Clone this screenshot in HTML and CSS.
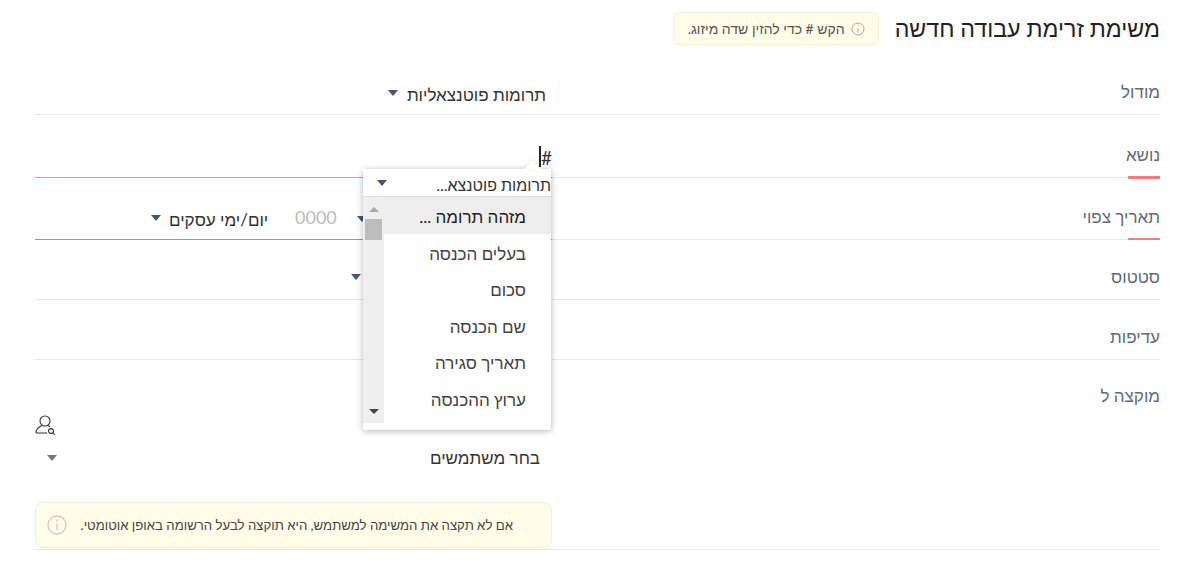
FILE: index.html
```html
<!DOCTYPE html>
<html lang="he" dir="rtl">
<head>
<meta charset="utf-8">
<title>משימת זרימת עבודה חדשה</title>
<link rel="stylesheet" href="styles.css">
</head>
<body>
<main class="form">
  <header class="head">
    <h1 class="title">משימת זרימת עבודה חדשה</h1>
    <div class="hint">
      <svg class="hint-icon" viewBox="0 0 14 14"><circle cx="7" cy="7" r="6"/><path d="M7 6v4.500M7 3.500v1.200"/></svg>
      <span>הקש # כדי להזין שדה מיזוג.</span>
    </div>
  </header>

  <section class="row row-module">
    <label class="label">מודול</label>
    <div class="field plain">
      <span class="value">תרומות פוטנצאליות</span>
      <i class="caret"></i>
    </div>
  </section>

  <section class="row row-subject">
    <label class="label req">נושא</label>
    <div class="field active">
      <span class="value hash">#</span><span class="cursor"></span>
      <div class="popup">
        <i class="notch"></i>
        <div class="popup-head"><span>תרומות פוטנצא...</span><i class="caret"></i></div>
        <div class="popup-body">
          <ul class="list">
            <li class="sel">מזהה תרומה ...</li>
            <li>בעלים הכנסה</li>
            <li>סכום</li>
            <li>שם הכנסה</li>
            <li>תאריך סגירה</li>
            <li>ערוץ ההכנסה</li>
          </ul>
          <div class="scroll">
            <i class="arrow up"></i>
            <i class="thumb"></i>
            <i class="arrow down"></i>
          </div>
        </div>
      </div>
    </div>
  </section>

  <section class="row row-date">
    <label class="label req">תאריך צפוי</label>
    <div class="field dated">
      <i class="caret"></i>
      <span class="zeros">0000</span>
      <span class="value">יום/ימי עסקים</span>
      <i class="caret"></i>
    </div>
  </section>

  <section class="row row-status">
    <label class="label">סטטוס</label>
    <div class="field plain"><i class="caret"></i></div>
  </section>

  <section class="row row-priority">
    <label class="label">עדיפות</label>
    <div class="field plain"></div>
  </section>

  <section class="row row-owner">
    <label class="label">מוקצה ל</label>
    <div class="owner">
      <svg class="user-icon" viewBox="0 0 20 20"><circle cx="10" cy="6" r="5"/><path d="M7 10.500C4 12 1.800 14 1 16.500c-.2.9.3 1.500 1.200 1.500H12M13 10.500c.8.400 1.500.9 2 1.300"/><circle cx="16" cy="16" r="2.400"/><path d="M17.700 17.700l2.300 2.300"/></svg>
      <div class="pick">
        <span class="value">בחר משתמשים</span>
        <i class="caret grey"></i>
      </div>
      <div class="note">
        <span>אם לא תקצה את המשימה למשתמש, היא תוקצה לבעל הרשומה באופן אוטומטי.</span>
        <svg class="note-icon" viewBox="0 0 20 20"><circle cx="10" cy="10" r="9"/><path d="M10 8.500v6.500M10 4.500v2"/></svg>
      </div>
    </div>
  </section>
</main>
</body>
</html>
```
FILE: styles.css
```css
* { box-sizing: border-box; }
html, body { margin: 0; padding: 0; background: #fff; height: 562px; overflow: hidden; }
body { font-family: "Lato", "Liberation Sans", sans-serif; color: #333; }
i { display: block; font-style: normal; }

.form { padding: 0 35px; }

.head { display: flex; align-items: flex-start; height: 70px; padding-top: 12px; }
.title { margin: 0 0 0 16px; font-size: 23.2px; font-weight: 400; line-height: 32px; color: #222; }
.hint { display: flex; align-items: center; gap: 6px; height: 33px; padding: 0 13px 0 14px; background: #fffde8; border: 1px solid #f3f0d4; border-radius: 6px; font-size: 14px; color: #555; }
.hint-icon { width: 14px; height: 14px; fill: none; stroke: #aaa; stroke-width: 1; }

.row { display: flex; justify-content: space-between; border-bottom: 1px solid #e8e8e8; position: relative; }
.row-module { height: 45px; }
.row-subject { height: 63px; }
.row-date { height: 62px; }
.row-status { height: 60px; }
.row-priority { height: 60px; }
.row-owner { height: 190px; }

.label { font-size: 17px; line-height: 20px; color: #5f6b7a; padding-top: 12px; }
.row-subject .label { padding-top: 30px; }
.row-date .label { padding-top: 29px; }
.row-status .label { padding-top: 27px; }
.row-priority .label { padding-top: 27px; }
.row-owner .label { padding-top: 26px; }
.req::after { content: ""; position: absolute; right: 0; bottom: -1px; width: 32px; height: 2px; background: #f67a7a; }
.row-subject .req::after { height: 3px; bottom: -2px; }

.field { width: 517px; display: flex; align-items: flex-start; position: relative; }
.value { font-size: 17px; line-height: 20px; color: #333; }

.caret { width: 0; height: 0; border-left: 5px solid transparent; border-right: 5px solid transparent; border-top: 6px solid #3d5a75; }
.caret.grey { border-top-color: #777; }

.row-module .field { padding: 15px 6px 0 0; gap: 9px; }
.row-module .caret { margin-top: 5px; }

.active { border-bottom: 1px solid #5ccfee; margin-bottom: -1px; padding: 31px 0 0 0; }
.cursor { width: 2px; height: 21px; background: #222; }
.hash { font-size: 19px; margin: 2px 0 0 0; }

.popup { position: absolute; top: 54px; left: 328px; width: 188px; height: 261px; background: #fff; box-shadow: 0 1px 6px rgba(0,0,0,.3); border-radius: 2px; z-index: 5; }
.notch { position: absolute; top: -6px; right: 12px; width: 13px; height: 13px; background: #fff; transform: rotate(45deg); box-shadow: -1px -1px 2px rgba(0,0,0,.08); }
.popup-head { position: relative; display: flex; justify-content: space-between; align-items: center; height: 28px; padding: 5px 0 0 14px; border-bottom: 1px solid #ddd; font-size: 16px; background: #fff; }
.popup-head .caret { margin-top: -5px; }
.popup-body { display: flex; justify-content: space-between; height: 226px; }
.list { list-style: none; margin: 0; padding: 0; flex: 1; font-size: 17px; }
.list li { height: 36.6px; line-height: 40px; padding-right: 25px; color: #444; }
.list li.sel { background: #ededed; color: #222; }
.scroll { width: 21px; height: 226px; background: #efefef; position: relative; display: flex; flex-direction: column; align-items: center; }
.arrow { width: 0; height: 0; border-left: 5px solid transparent; border-right: 5px solid transparent; }
.arrow.up { border-bottom: 5px solid #aaa; margin-top: 10px; }
.thumb { width: 17px; height: 21px; background: #bdbdbd; margin-top: 7px; }
.arrow.down { border-top: 5px solid #444; position: absolute; bottom: 9px; }

.dated { border-bottom: 1px solid #999; margin-bottom: -1px; padding: 29px 0 0 0; }
.dated > .caret:first-child { position: absolute; left: 322px; top: 38px; }
.dated .value { position: absolute; left: 134px; top: 32px; }
.dated .zeros { position: absolute; left: 260px; top: 27px; font-size: 18px; line-height: 24px; color: #bbb; }
.dated > .caret:last-child { position: absolute; left: 116px; top: 37px; }

.row-status .field .caret { margin: 34px 191px 0 0; }

.owner { width: 517px; position: relative; display: flex; flex-direction: column; }
.user-icon { width: 20px; height: 20px; margin: 55px auto 0 0; fill: none; stroke: #333; stroke-width: 1.100; }
.pick { display: flex; justify-content: space-between; align-items: center; margin-top: 11px; padding: 0 12px; height: 24px; }
.note { display: flex; justify-content: space-between; align-items: center; margin-top: 32px; height: 46px; padding: 0 38px 0 11px; background: #fffde8; border: 1px solid #f3f0d4; border-radius: 8px; font-size: 13.2px; white-space: nowrap; color: #444; }
.note-icon { width: 20px; height: 20px; fill: none; stroke: #c8c8c8; stroke-width: 1.300; }
```
